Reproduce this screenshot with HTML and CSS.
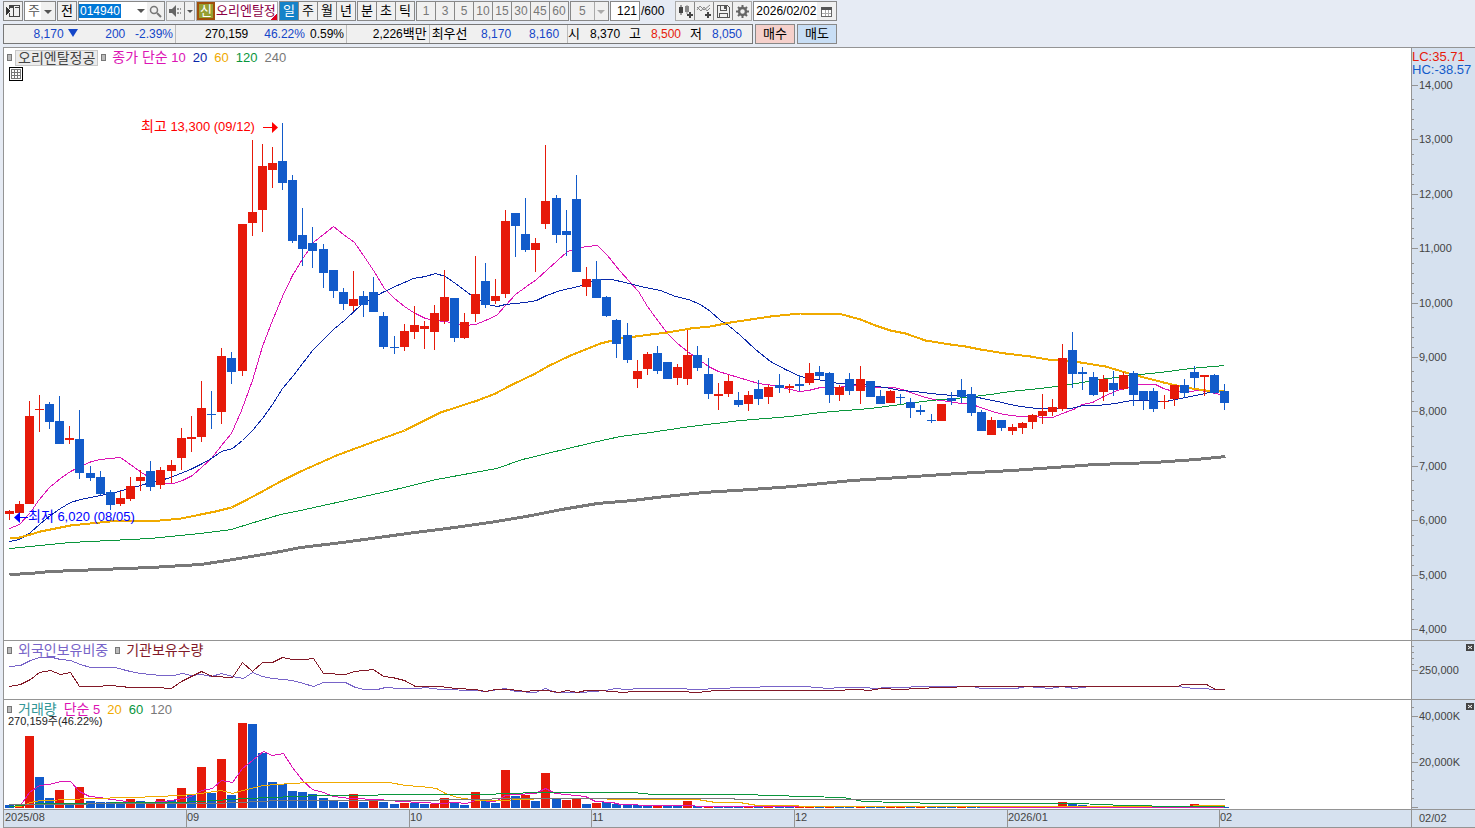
FILE: index.html
```html
<!DOCTYPE html>
<html lang="ko">
<head>
    <meta charset="UTF-8">
    <meta name="viewport" content="width=device-width, initial-scale=1.0">
    <title>오리엔탈정공 일봉 차트</title>
    <link rel="stylesheet" href="styles.css">
</head>
<body>
    <header class="toolbar">
        <div class="tools">
            <button class="tool" type="button" aria-label="화면 전환">
                <svg width="17" height="16" viewBox="0 0 17 16" shape-rendering="crispEdges"><path d="M4.500 6V2.500h10v11h-10V10M8.500 2v11M10 4.500h4" fill="none" stroke="#444"/><path d="M4 4h4" stroke="#444" stroke-width="2"/><path d="M1 4l4 4-4 4z" fill="#333"/></svg>
            </button>
            <span class="drop cycle"><select aria-label="구분"><option>주</option></select></span>
            <button class="tool" type="button">전</button>
            <span class="code">
                <input type="text" value="014940" aria-label="종목코드">
                <button class="bare arrow" type="button" aria-label="종목 목록"></button>
                <button class="flat" type="button" aria-label="종목 검색"><svg width="13" height="13" viewBox="0 0 13 13"><circle cx="5" cy="5" r="3.500" fill="none" stroke="#777" stroke-width="1.500"/><path d="M8 8l4 4" stroke="#777" stroke-width="2"/></svg></button>
            </span>
            <span class="group sound">
                <button type="button" aria-label="소리"><svg width="13" height="12" viewBox="0 0 13 12"><path d="M0 4h3l4-4v12L3 8H0z" fill="#666"/><path d="M8 3h2v2H8zM8 7h2v2H8zM11 3h1v2h-1zM11 7h1v2h-1z" fill="#999"/></svg></button>
                <button class="arrow thin" type="button" aria-label="소리 설정"></button>
            </span>
            <span class="stock"><b>신</b><span>오리엔탈정</span></span>
            <span class="group">
                <button class="active" type="button">일</button>
                <button type="button">주</button>
                <button type="button">월</button>
                <button type="button">년</button>
            </span>
            <span class="group">
                <button type="button">분</button>
                <button type="button">초</button>
                <button type="button">틱</button>
            </span>
            <span class="group">
                <button type="button" disabled>1</button>
                <button type="button" disabled>3</button>
                <button type="button" disabled>5</button>
                <button type="button" disabled>10</button>
                <button type="button" disabled>15</button>
                <button type="button" disabled>30</button>
                <button type="button" disabled>45</button>
                <button type="button" disabled>60</button>
            </span>
            <span class="drop minutes"><select aria-label="분 단위" disabled><option>5</option></select></span>
            <label class="count"><input type="text" value="121" aria-label="봉 개수">/600</label>
            <span class="group icons">
                <button type="button" aria-label="차트 추가"><svg width="17" height="17" viewBox="0 0 17 17"><path d="M2 4h4v6H2zM3.500 2h1v10h-1z" fill="#444"/><path d="M8 3h4v6H8zM9.500 2h1v9h-1z" fill="#888"/><path d="M12 9h2v2h2v2h-2v2h-2v-2h-2v-2h2z" fill="#444"/></svg></button>
                <button type="button" aria-label="지표 추가"><svg width="17" height="17" viewBox="0 0 17 17"><path d="M1 7l3-4 4 4 6-5M1 4l4 4 3-4 3 4 3-3" fill="none" stroke="#888"/><path d="M11 9h2v2h2v2h-2v2h-2v-2H9v-2h2z" fill="#444"/></svg></button>
                <button type="button" aria-label="저장"><svg width="17" height="17" viewBox="0 0 17 17" shape-rendering="crispEdges"><path d="M2.500 2.500h10l2 2v10h-12zM5.500 3v4h6V3M4.500 14v-4h8v4" fill="none" stroke="#555"/><path d="M9 3h2v3H9z" fill="#555"/></svg></button>
                <button type="button" aria-label="설정"><svg width="17" height="17" viewBox="0 0 17 17"><circle cx="8.500" cy="8.500" r="3.500" fill="none" stroke="#666" stroke-width="2.500"/><path d="M8.500 2v3M8.500 12v3M2 8.500h3M12 8.500h3M4 4l2 2M11 11l2 2M4 13l2-2M11 6l2-2" stroke="#666" stroke-width="2"/></svg></button>
            </span>
            <span class="date">
                <input type="text" value="2026/02/02" aria-label="조회일">
                <button class="flat" type="button" aria-label="달력"><svg width="11" height="11" viewBox="0 0 11 11" shape-rendering="crispEdges"><path d="M.5 1.500h10v9H.5z" fill="#fff" stroke="#666"/><path d="M0 1h11v3H0z" fill="#555"/><path d="M4 4v6M7 4v6M1 7h9" stroke="#aaa"/></svg></button>
            </span>
        </div>
        <div class="quotes">
            <div class="quote-bar">
                <div class="cell price"><span class="down w-lg">8,170<i></i></span><span class="down w-md">200</span><span class="down w-md">-2.39%</span></div>
                <div class="cell volume"><span class="w-lg">270,159</span><span class="down w-md">46.22%</span><span class="w-sm">0.59%</span></div>
                <div class="cell amount"><span>2,226<em>백만</em></span></div>
                <div class="cell best"><em>최우선</em><span class="down w-sm">8,170</span><span class="down w-md">8,160</span></div>
                <div class="cell range"><em>시</em><span class="w-sm">8,370</span><em>고</em><span class="up w-sm">8,500</span><em>저</em><span class="down w-sm">8,050</span></div>
            </div>
            <button class="order buy" type="button">매수</button>
            <button class="order sell" type="button">매도</button>
        </div>
    </header>

    <main class="chart">
        <section class="panel">
            <div class="plot">
                <svg id="price" viewBox="4 48 1407 592" preserveAspectRatio="none"></svg>
                <div class="legend">
                    <i class="mark"></i><span class="name">오리엔탈정공</span>
                    <i class="mark"></i><span class="magenta"><em>종가 단순</em> 10</span>
                    <span class="navy">20</span><span class="gold">60</span><span class="green">120</span><span class="gray">240</span>
                </div>
                <button class="table-btn" type="button" aria-label="표 보기"><svg width="12" height="12" viewBox="0 0 12 12" shape-rendering="crispEdges"><path d="M1.500 1.500h9v9h-9zM1 4.500h10M1 7.500h10M4.500 1v10M7.500 1v10" fill="none" stroke="#777"/></svg></button>
            </div>
            <div class="axis">
                <svg id="price-axis" viewBox="1412 48 63 592" preserveAspectRatio="none"></svg>
                <p class="change"><span class="up">LC:35.71</span><span class="hc">HC:-38.57</span></p>
            </div>
        </section>
        <section class="panel">
            <div class="plot">
                <svg id="holding" viewBox="4 641 1407 58" preserveAspectRatio="none"></svg>
                <div class="legend">
                    <i class="mark"></i><span class="purple"><em>외국인보유비중</em></span>
                    <i class="mark"></i><span class="maroon"><em>기관보유수량</em></span>
                </div>
            </div>
            <div class="axis">
                <svg id="holding-axis" viewBox="1412 641 63 58" preserveAspectRatio="none"></svg>
                <button class="close" type="button" aria-label="닫기"><svg width="8" height="7" viewBox="0 0 8 7"><path d="M2 2l4 3M6 2L2 5" stroke="#fff"/></svg></button>
            </div>
        </section>
        <section class="panel">
            <div class="plot">
                <svg id="volume" viewBox="4 700 1407 109" preserveAspectRatio="none"></svg>
                <div class="legend">
                    <i class="mark"></i><span class="teal"><em>거래량</em></span>
                    <span class="magenta"><em>단순</em> 5</span><span class="gold">20</span><span class="green">60</span><span class="gray">120</span>
                </div>
                <p class="volume-now">270,159<em>주</em>(46.22%)</p>
            </div>
            <div class="axis">
                <svg id="volume-axis" viewBox="1412 700 63 109" preserveAspectRatio="none"></svg>
                <button class="close" type="button" aria-label="닫기"><svg width="8" height="7" viewBox="0 0 8 7"><path d="M2 2l4 3M6 2L2 5" stroke="#fff"/></svg></button>
            </div>
        </section>
        <section class="panel dates">
            <div class="plot">
                <svg id="months" viewBox="4 810 1407 17" preserveAspectRatio="none"></svg>
            </div>
            <div class="axis today">02/02</div>
        </section>
    </main>
    <script src="chart.js"></script>
</body>
</html>
```

FILE: styles.css
```css
:root {
    --up: #e61a0a;
    --down: #125bca;
    --line: #949494;
    --axis: #d6e1ef;
    --magenta: #dc14b4;
    --navy: #0a28aa;
    --gold: #f0aa00;
    --green: #0a963c;
    --gray: #787878;
}

* {
    box-sizing: border-box;
}

body {
    margin: 0;
    height: 100vh;
    display: flex;
    flex-direction: column;
    overflow: hidden;
    background: #e6ebf4;
    color: #000;
    font: 12px/16px "Liberation Sans", "Noto Sans CJK KR", sans-serif;
}

button, input, select {
    margin: 0;
    padding: 0;
    border: 0;
    border-radius: 0;
    background: none;
    color: inherit;
    font: inherit;
}

em, i {
    font-style: normal;
}

p {
    margin: 0;
}

/* Toolbar */
.toolbar {
    height: 47px;
    flex: none;
    padding: 1px 3px 0;
    display: flex;
    flex-direction: column;
    gap: 3px;
    white-space: nowrap;
}

.tools {
    height: 20px;
    display: flex;
    gap: 1px;
}

.tools > * {
    flex: none;
    border: 1px solid #888;
    background: #f0f0f0;
}

.tools button {
    display: flex;
    align-items: center;
    justify-content: center;
    font-size: 13px;
}

.tool {
    width: 20px;
}

.group {
    display: flex;
}

.group button {
    width: 19px;
    border-left: 1px solid #888;
}

.group button:first-child {
    width: 18px;
    border-left: 0;
}

.group button:disabled {
    color: #777;
    font-size: 12px;
}

.group .active {
    background: #1482c8;
    color: #fff;
}

.tools .sound,
.tools .icons {
    border-color: #aaa;
    width: 29px;
}

.tools .icons {
    width: 77px;
    margin-left: 10px;
}

.group .thin {
    width: 10px;
}

.drop {
    position: relative;
    display: flex;
    width: 32px;
}

.drop select {
    width: 100%;
    padding-left: 3px;
    appearance: none;
    font-size: 13px;
    background: linear-gradient(90deg, #fff 16px, #f0f0f0 16px);
    color: #555;
}

.drop::after,
.arrow::after {
    content: "";
    border: 4px solid transparent;
    border-top: 4px solid #555;
    border-bottom: 0;
}

.drop::after {
    position: absolute;
    right: 3px;
    top: 8px;
}

.thin::after {
    border-width: 3px 3px 0;
}

.minutes {
    width: 39px;
}

.minutes select {
    padding-left: 8px;
    background: linear-gradient(90deg, #f0f0f0 23px, #aaa 23px, #aaa 24px, #f0f0f0 24px);
    color: #777;
    font-size: 12px;
    opacity: 1;
}

.minutes::after {
    border-top-color: #aaa;
}

.code {
    width: 87px;
    display: flex;
    background: #fff;
}

.code input {
    width: 56px;
    padding-left: 1px;
    background: linear-gradient(#0078d7, #0078d7) 0 2px / 42px 14px no-repeat;
    color: #fff;
}

.code .bare {
    width: 12px;
}

.code .flat {
    flex: 1;
    background: #f0f0f0;
}

.tools .stock {
    width: 82px;
    display: flex;
    overflow: hidden;
    border-color: #aaa;
    background: linear-gradient(135deg, transparent 50%, #e00020 50%) right bottom / 7px 7px no-repeat #fff;
    color: #8c0046;
    font-size: 13px;
    line-height: 17px;
}

.stock b {
    width: 18px;
    flex: none;
    border: 2px solid #a0500a;
    background: #96a032;
    color: #fff;
    font-weight: 400;
    line-height: 13px;
    text-align: center;
}

.stock span {
    padding-left: 1px;
}

.tools .count {
    display: flex;
    align-items: center;
    border: 0;
    background: none;
}

.count input {
    width: 30px;
    height: 20px;
    margin-right: 1px;
    padding-right: 2px;
    border: 1px solid #888;
    background: #fff;
    text-align: right;
}

.date {
    width: 84px;
    display: flex;
    background: #fff;
}

.date input {
    width: 63px;
    padding-left: 2px;
}

.date .flat {
    flex: 1;
    background: #f0f0f0;
}

/* Quote row */
.quotes {
    height: 20px;
    display: flex;
    gap: 2px;
}

.quote-bar {
    width: 750px;
    display: flex;
    border: 1px solid #777;
    background: #f0f0f0;
    line-height: 18px;
    text-align: right;
}

.quote-bar em {
    font-size: 13px;
}

.cell {
    display: flex;
    justify-content: flex-end;
    padding-right: 2px;
    border-right: 1px solid #bbb;
}

.cell:last-child {
    border-right: 0;
}

.w-lg { width: 74px; }
.w-md { width: 48px; }
.w-sm { width: 40px; }

.price { width: 172px; }
.volume { width: 171px; }
.volume .w-md { width: 58px; }
.amount { width: 83px; }
.best { width: 139px; padding: 0 8px 0 2px; }
.best em { margin-right: auto; }
.range { flex: 1; padding-right: 10px; gap: 9px; }
.range .w-sm { width: 31px; }
.range em { flex: none; }

.price .w-lg i {
    display: inline-block;
    margin: 0 0 1px 4px;
    border: 5px solid transparent;
    border-top: 8px solid #1446c8;
    border-bottom: 0;
}

.quote-bar .down {
    color: #1446c8;
}

.up {
    color: var(--up);
}

.order {
    width: 40px;
    border: 1px solid #888;
    font-size: 13px;
}

.buy { background: #f5d0cb; }
.sell { background: #c8def5; }

/* Chart */
.chart {
    flex: 1;
    min-height: 0;
    margin-left: 3px;
    display: grid;
    grid-template-rows: 593fr 59fr 110fr 18px;
    border-top: 1px solid var(--line);
    border-left: 1px solid var(--line);
    background: #fff;
}

.panel {
    min-height: 0;
    display: flex;
    border-bottom: 1px solid var(--line);
}

.plot {
    position: relative;
    flex: 1;
    min-width: 0;
}

.plot > svg,
.axis > svg {
    display: block;
    width: 100%;
    height: 100%;
}

.axis {
    position: relative;
    width: 64px;
    flex: none;
    border-left: 1px solid var(--line);
    background: var(--axis);
}

.dates {
    background: var(--axis);
}

.today {
    padding-left: 7px;
    color: #444;
    font-size: 11px;
}

.legend {
    position: absolute;
    top: 1px;
    left: 3px;
    display: flex;
    align-items: center;
    gap: 7px;
    font-size: 13px;
    line-height: 16px;
}

.legend em,
.legend .name {
    font-size: 14px;
}

.legend .name {
    padding: 0 2px;
    margin: 0 -4px 0 -3px;
    border: 1px solid #c8c8c8;
    background: #ebebeb;
    color: #444;
    line-height: 14px;
}

.legend .mark {
    width: 5px;
    height: 7px;
    border: 1px solid #777;
    background: #bbb;
    margin-right: -1px;
}

.magenta { color: var(--magenta); }
.navy { color: var(--navy); }
.gold { color: var(--gold); }
.green { color: var(--green); }
.gray { color: var(--gray); }
.purple { color: #7864c8; }
.maroon { color: #821928; }
.teal { color: #329696; }

.table-btn {
    position: absolute;
    top: 19px;
    left: 5px;
    width: 14px;
    height: 14px;
    border: 1px solid #000;
    display: flex;
}

.volume-now {
    position: absolute;
    top: 15px;
    left: 4px;
    color: #222;
    font-size: 11px;
    line-height: 12px;
}

.change {
    position: absolute;
    top: 2px;
    left: 0;
    font-size: 13px;
    line-height: 13px;
}

.change span {
    display: block;
}

.hc {
    color: var(--down);
}

.close {
    position: absolute;
    top: 3px;
    right: 1px;
    width: 8px;
    height: 7px;
    display: flex;
    background: #444;
}

/* Drawn series */
svg .line {
    fill: none;
    shape-rendering: crispEdges;
}

svg .bar,
svg .tick {
    shape-rendering: crispEdges;
}

svg .tick {
    fill: var(--line);
}

svg .label {
    fill: #444;
    font-size: 11px;
}

svg .note {
    font-size: 13px;
}

svg .note tspan {
    font-size: 14px;
}
```

FILE: chart.js
```javascript
const NS = 'http://www.w3.org/2000/svg';
const UP = '#e61a0a';
const DOWN = '#125bca';

// direction, body top, body bottom, high, low
const candles = `r 511 514 510 520,r 504 513 501 513,r 416 504 401 504,r 409 410 395 432,b 404 422 402 429,b 421 444 396 444,
r 438 440 426 444,b 439 473 410 479,b 473 478 466 481,b 477 494 471 495,b 492 505 490 510,r 498 504 491 506,
r 486 499 477 501,r 477 481 470 491,b 471 487 461 491,r 470 485 467 489,r 465 471 460 483,r 438 458 428 470,
r 437 439 416 452,r 408 437 381 442,b 414 415 391 429,r 356 412 348 424,b 358 372 352 384,r 224 371 224 376,
r 212 223 140 236,r 166 210 144 232,r 163 170 147 188,b 161 183 123 190,b 180 241 175 243,b 235 249 208 266,
b 243 251 227 268,b 249 273 244 288,b 270 291 270 298,b 292 304 288 310,r 299 306 271 311,b 296 305 291 317,
b 292 312 277 312,b 316 347 312 349,b 347 348 336 354,r 331 347 324 351,r 325 332 306 339,r 326 329 321 349,
r 313 332 305 350,r 297 321 270 324,b 298 338 298 342,r 322 338 313 339,r 294 314 256 322,b 281 305 263 308,
r 296 301 279 304,r 221 294 210 298,b 213 226 213 257,b 234 250 198 252,r 243 250 238 272,r 201 224 145 229,
b 198 235 195 243,b 231 235 210 256,b 199 272 175 272,r 279 287 267 296,b 279 298 261 298,b 297 316 296 317,
b 320 344 319 358,b 335 360 323 363,r 371 379 360 388,r 354 369 352 375,b 353 371 346 374,b 362 379 362 379,
r 367 378 364 385,r 355 379 330 385,b 355 368 346 371,b 374 394 358 399,r 394 396 383 410,r 381 394 375 397,
b 400 405 392 407,r 395 404 391 411,b 389 399 380 405,r 387 397 385 404,b 385 388 374 393,r 386 388 384 393,
b 384 386 375 391,r 373 383 363 385,b 372 376 366 379,b 373 395 372 403,r 387 395 385 401,b 379 391 373 395,
r 379 391 366 404,b 381 397 381 397,b 396 404 390 404,r 391 403 390 403,b 397 398 394 404,b 402 408 398 418,
b 410 412 405 415,b 420 421 414 423,r 404 421 404 421,b 398 401 392 405,b 390 397 379 403,b 394 413 387 416,
b 412 431 410 431,r 420 435 417 435,b 420 428 420 431,r 427 431 424 435,r 423 428 422 434,r 415 422 414 429,
r 411 416 394 424,r 407 412 399 416,r 358 409 344 411,b 350 374 332 388,b 372 374 367 390,b 377 395 372 396,
r 379 392 375 401,b 383 390 371 396,r 375 389 372 390,b 373 395 371 406,b 391 400 391 410,b 391 409 388 412,
r 401 402 395 409,r 385 399 385 406,b 385 393 379 398,b 372 378 366 388,r 375 377 375 396,b 375 393 374 394,
b 391 403 384 410`;

// direction and top of each volume bar
const volumes = `b805 r806 r736 b777 b798 r790 b803 r787 b801 b802 b802 b803 r799 b801 r802 r799 b800 r788 b794 r767
b793 r759 b795 r723 b724 b753 b782 b784 b791 b792 b794 b798 b801 b802 r794 b802 r801 b802 b804 r803
b803 b804 r804 r798 b803 b805 r792 b801 b803 r770 b796 r795 b801 r773 b799 r800 r799 b804 r803 b802
b804 b805 b805 b806 r805 b806 b806 r801 b806 r806 b806 b806 b807 r807 b807 r807 b807 b807 r807 r807
b807 r807 b807 b807 r806 b807 b807 r807 r807 b807 r807 b807 b807 b807 r806 b807 b807 r807 b807 r807
r807 r807 r806 b807 r802 b803 b805 b806 r807 b807 r807 b807 b807 b807 r807 r807 b807 r804 b806 b807 b807`;

const priceLines = [
    ['#dc14b4', 1, '9,528 19,524 30,512 38,500 49,487 60,478 70,471 80,466 91,461 100,459 110,458 120,457 141,472 155,481 165,483 173,483 182,480 192,475 201,467 211,458 221,445 231,433 241,410 252,380 262,346 272,320 282,296 292,275 303,257 314,241 323,234 333,226 343,234 354,242 363,255 373,270 384,288 394,298 404,306 413,312 425,318 434,320 445,321 454,323 465,325 475,324 485,320 496,315 505,305 515,294 526,286 536,279 547,269 557,260 567,251 577,248 586,246 597,245 607,255 619,270 629,281 638,291 647,306 658,321 667,333 677,343 687,351 697,358 708,366 718,371 728,374 738,377 748,380 758,383 773,385 790,389 799,391 808,390 820,387 835,387 857,385 877,387 893,387 902,389 910,392 922,396 933,399 948,401 960,403 972,404 980,407 992,411 1003,414 1020,416 1033,416 1043,417 1052,417 1062,413 1073,409 1082,404 1092,402 1103,396 1117,390 1127,387 1140,384 1155,384 1163,388 1173,391 1187,391 1200,390 1210,392 1220,394'],
    ['#0a28aa', 1, '9,541 19,539 30,532 40,523 50,515 60,508 70,502 80,499 90,497 100,495 115,492 125,489 140,485 150,482 160,480 170,477 180,473 190,469 200,464 211,458 221,451 232,448 242,440 252,430 262,418 272,404 282,388 293,375 312,350 333,329 345,319 362,303 382,292 397,285 413,278 425,276 435,273 445,276 455,283 471,295 480,300 487,304 497,306 505,304 525,302 536,300 546,295 560,290 578,286 590,281 597,279 611,279 625,282 640,286 660,290 675,296 688,299 700,304 710,311 720,320 728,325 740,335 755,349 770,361 785,369 800,376 822,380 838,383 862,384 875,386 885,387 900,390 915,391 930,393 952,395 970,395 982,398 997,401 1010,404 1020,406 1037,408 1070,408 1083,405 1097,405 1115,403 1131,400 1145,400 1165,401 1180,398 1200,394 1213,391 1224,390'],
    ['#f0aa00', 2, '9,537 19,537 30,534 40,531 50,529 70,525 90,523 110,521 160,520 181,518 200,514 215,511 231,507 245,500 260,492 280,481 300,471 336,455 371,442 404,430 440,412 477,400 495,393 510,385 535,373 547,366 570,355 585,349 600,343 620,338 650,334 667,332 690,328 710,326 730,322 750,319 770,316 800,313 838,313 860,319 875,325 890,330 905,333 925,340 950,344 965,346 980,349 1005,353 1030,356 1047,359 1080,362 1105,366 1125,372 1140,376 1163,382 1185,387 1205,390 1224,391'],
    ['#0a963c', 1, '9,548 30,546 70,542 110,540 150,538 200,533 231,529 250,523 280,514 300,510 359,497 395,489 436,479 496,468 522,459 555,451 597,441 620,436 650,432 690,426 740,420 790,416 820,412 870,408 900,404 930,400 965,397 990,394 1010,391 1040,388 1070,384 1100,379 1130,375 1160,372 1190,368 1224,365'],
    ['#787878', 3, '9,574 30,573 50,571 100,569 150,567 200,564 220,561 245,557 280,551 300,547 342,542 407,533 454,527 496,521 531,515 561,509 597,503 632,500 656,497 703,492 751,489 792,486 852,480 899,477 958,473 1012,470 1095,464 1154,462 1196,459 1225,456']
];

const holdingLines = [
    ['#7864c8', 1, '9,666 20,665 30,660 39,657 52,657 60,659 70,660 80,664 90,667 115,667 122,669 130,671 140,673 150,674 160,675 173,675 182,673 191,675 201,674 211,676 221,673 232,676 243,678 252,672 262,676 272,678 292,680 303,683 313,686 323,682 345,682 355,687 364,689 377,689 385,687 400,688 418,688 425,687 440,689 475,690 485,691 505,688 515,691 535,692 545,688 555,692 580,692 605,690 615,688 625,689 640,688 672,688 700,689 715,688 745,687 774,686 804,686 828,688 840,687 863,687 875,688 887,687 935,686 973,686 980,688 1015,688 1027,686 1050,688 1062,686 1074,688 1090,686 1178,686 1193,688 1224,689'],
    ['#821928', 1, '9,686 20,684 30,679 39,672 50,670 60,674 70,672 79,686 95,686 110,685 130,687 155,687 171,688 181,681 191,676 201,671 212,676 232,677 242,662 252,671 262,662 272,662 282,657 292,659 305,659 313,658 323,673 345,674 354,671 373,669 383,676 392,677 404,680 415,686 440,686 455,688 475,689 485,691 495,689 510,689 525,691 535,690 546,690 558,692 567,690 577,692 585,690 600,690 623,692 632,691 680,691 697,692 715,690 792,690 831,690 858,689 869,690 881,688 899,689 938,687 976,686 1178,686 1181,684 1206,684 1215,689 1224,689']
];

const volumeLines = [
    ['#dc14b4', 1, '20,805 29,792 39,785 49,784 60,781 70,781 79,791 89,796 100,797 110,799 120,800 130,802 145,802 165,801 182,798 191,796 201,790 212,788 221,780 232,782 242,768 252,760 263,751 272,755 283,753 292,767 303,781 312,789 323,792 333,796 350,798 378,799 400,801 420,802 440,803 455,802 466,803 475,800 495,801 505,795 515,794 535,793 545,788 555,793 585,796 595,801 612,802 620,804 655,805 733,806 1224,807'],
    ['#f0aa00', 1, '9,806 20,806 30,802 40,800 75,799 85,798 135,797 155,796 181,795 200,793 221,790 232,793 242,790 263,785 290,783 310,782 389,782 405,785 420,786 436,788 445,793 457,797 478,800 500,800 545,798 560,798 653,799 697,799 715,802 739,802 757,805 780,805 816,806 1190,806 1196,805 1224,805'],
    ['#0a963c', 1, '9,806 40,803 180,802 215,800 245,798 270,797 320,795 375,795 380,794 490,794 502,793 543,792 632,792 653,794 742,794 804,796 843,797 863,801 938,803 1077,803 1124,805 1178,806 1224,806'],
    ['#787878', 1, '9,804 165,803 215,803 235,802 262,801 275,800 437,800 440,799 545,798 733,798 735,799 1224,799']
];

function add(parent, tag, attrs, text) {
    const el = document.createElementNS(NS, tag);
    for (const key in attrs) {
        el.setAttribute(key, attrs[key]);
    }
    if (text) {
        el.textContent = text;
    }
    parent.appendChild(el);
    return el;
}

function barX(i) {
    return Math.floor(9 + 10.132 * i);
}

function rect(svg, x, y, width, height, fill) {
    add(svg, 'rect', { class: 'bar', x, y, width, height, fill });
}

function drawLines(svg, lines) {
    lines.forEach(([stroke, width, points]) => {
        // odd widths sit on the middle of a pixel
        const shifted = points.split(' ').map(p => {
            const [x, y] = p.split(',').map(Number);
            return (x + 0.5) + ',' + (y + 0.5);
        }).join(' ');
        add(svg, 'polyline', { class: 'line', points: shifted, stroke, 'stroke-width': width });
    });
}

function drawAxis(id, majors, minors) {
    const svg = document.getElementById(id);
    majors.forEach(([y, label]) => {
        add(svg, 'rect', { class: 'tick', x: 1412, y, width: 6, height: 1 });
        add(svg, 'text', { class: 'label', x: 1419, y: y + 4 }, label);
    });
    minors.forEach(y => add(svg, 'rect', { class: 'tick', x: 1412, y, width: 2, height: 1 }));
}

// Price
const price = document.getElementById('price');
drawLines(price, priceLines);
candles.split(',').forEach((row, i) => {
    const [dir, top, bottom, high, low] = row.trim().split(' ');
    const x = barX(i);
    const color = dir === 'r' ? UP : DOWN;
    rect(price, x, +high, 1, low - high, color);
    rect(price, x - 4, +top, 9, bottom - top, color);
});

const highNote = add(price, 'text', { class: 'note', x: 141, y: 131, fill: '#f00' });
add(highNote, 'tspan', {}, '최고');
highNote.append(' 13,300 (09/12)');
add(price, 'path', { d: 'M263 127h9v-5l6 5.500-6 5.500v-5h-9z', fill: '#f00' });

const lowNote = add(price, 'text', { class: 'note', x: 28, y: 521, fill: '#00f' });
add(lowNote, 'tspan', {}, '최저');
lowNote.append(' 6,020 (08/05)');
add(price, 'path', { d: 'M28 517h-8v-5l-6 5.500 6 5.500v-5h8z', fill: '#00f' });

const priceMajors = [85, 139, 194, 248, 303, 357, 411, 466, 520, 575, 629]
    .map((y, i) => [y, (14 - i) + ',000']);
drawAxis('price-axis', priceMajors,
    priceMajors.slice(1).flatMap(([y]) => [y - 40, y - 30, y - 20, y - 10]));

// Holdings
drawLines(document.getElementById('holding'), holdingLines);
drawAxis('holding-axis', [[670, '250,000']], [646, 652, 658, 664]);

// Volume
const volume = document.getElementById('volume');
volumes.split(/\s+/).forEach((v, i) => {
    const top = +v.slice(1);
    rect(volume, barX(i) - 4, top, 9, 808 - top, v[0] === 'r' ? UP : DOWN);
});
drawLines(volume, volumeLines);
drawAxis('volume-axis', [[716, '40,000K'], [762, '20,000K'], [807, '']],
    [707, 726, 735, 744, 753, 771, 780, 789, 798]);

// Months
const months = document.getElementById('months');
[[4, '2025/08'], [186, '09'], [409, '10'], [591, '11'], [794, '12'], [1007, '2026/01'], [1219, '02']].forEach(([x, label], i) => {
    if (i > 0) {
        add(months, 'rect', { class: 'tick', x, y: 810, width: 1, height: 17 });
    }
    add(months, 'text', { class: 'label', x: x + 1, y: 821 }, label);
});
```
